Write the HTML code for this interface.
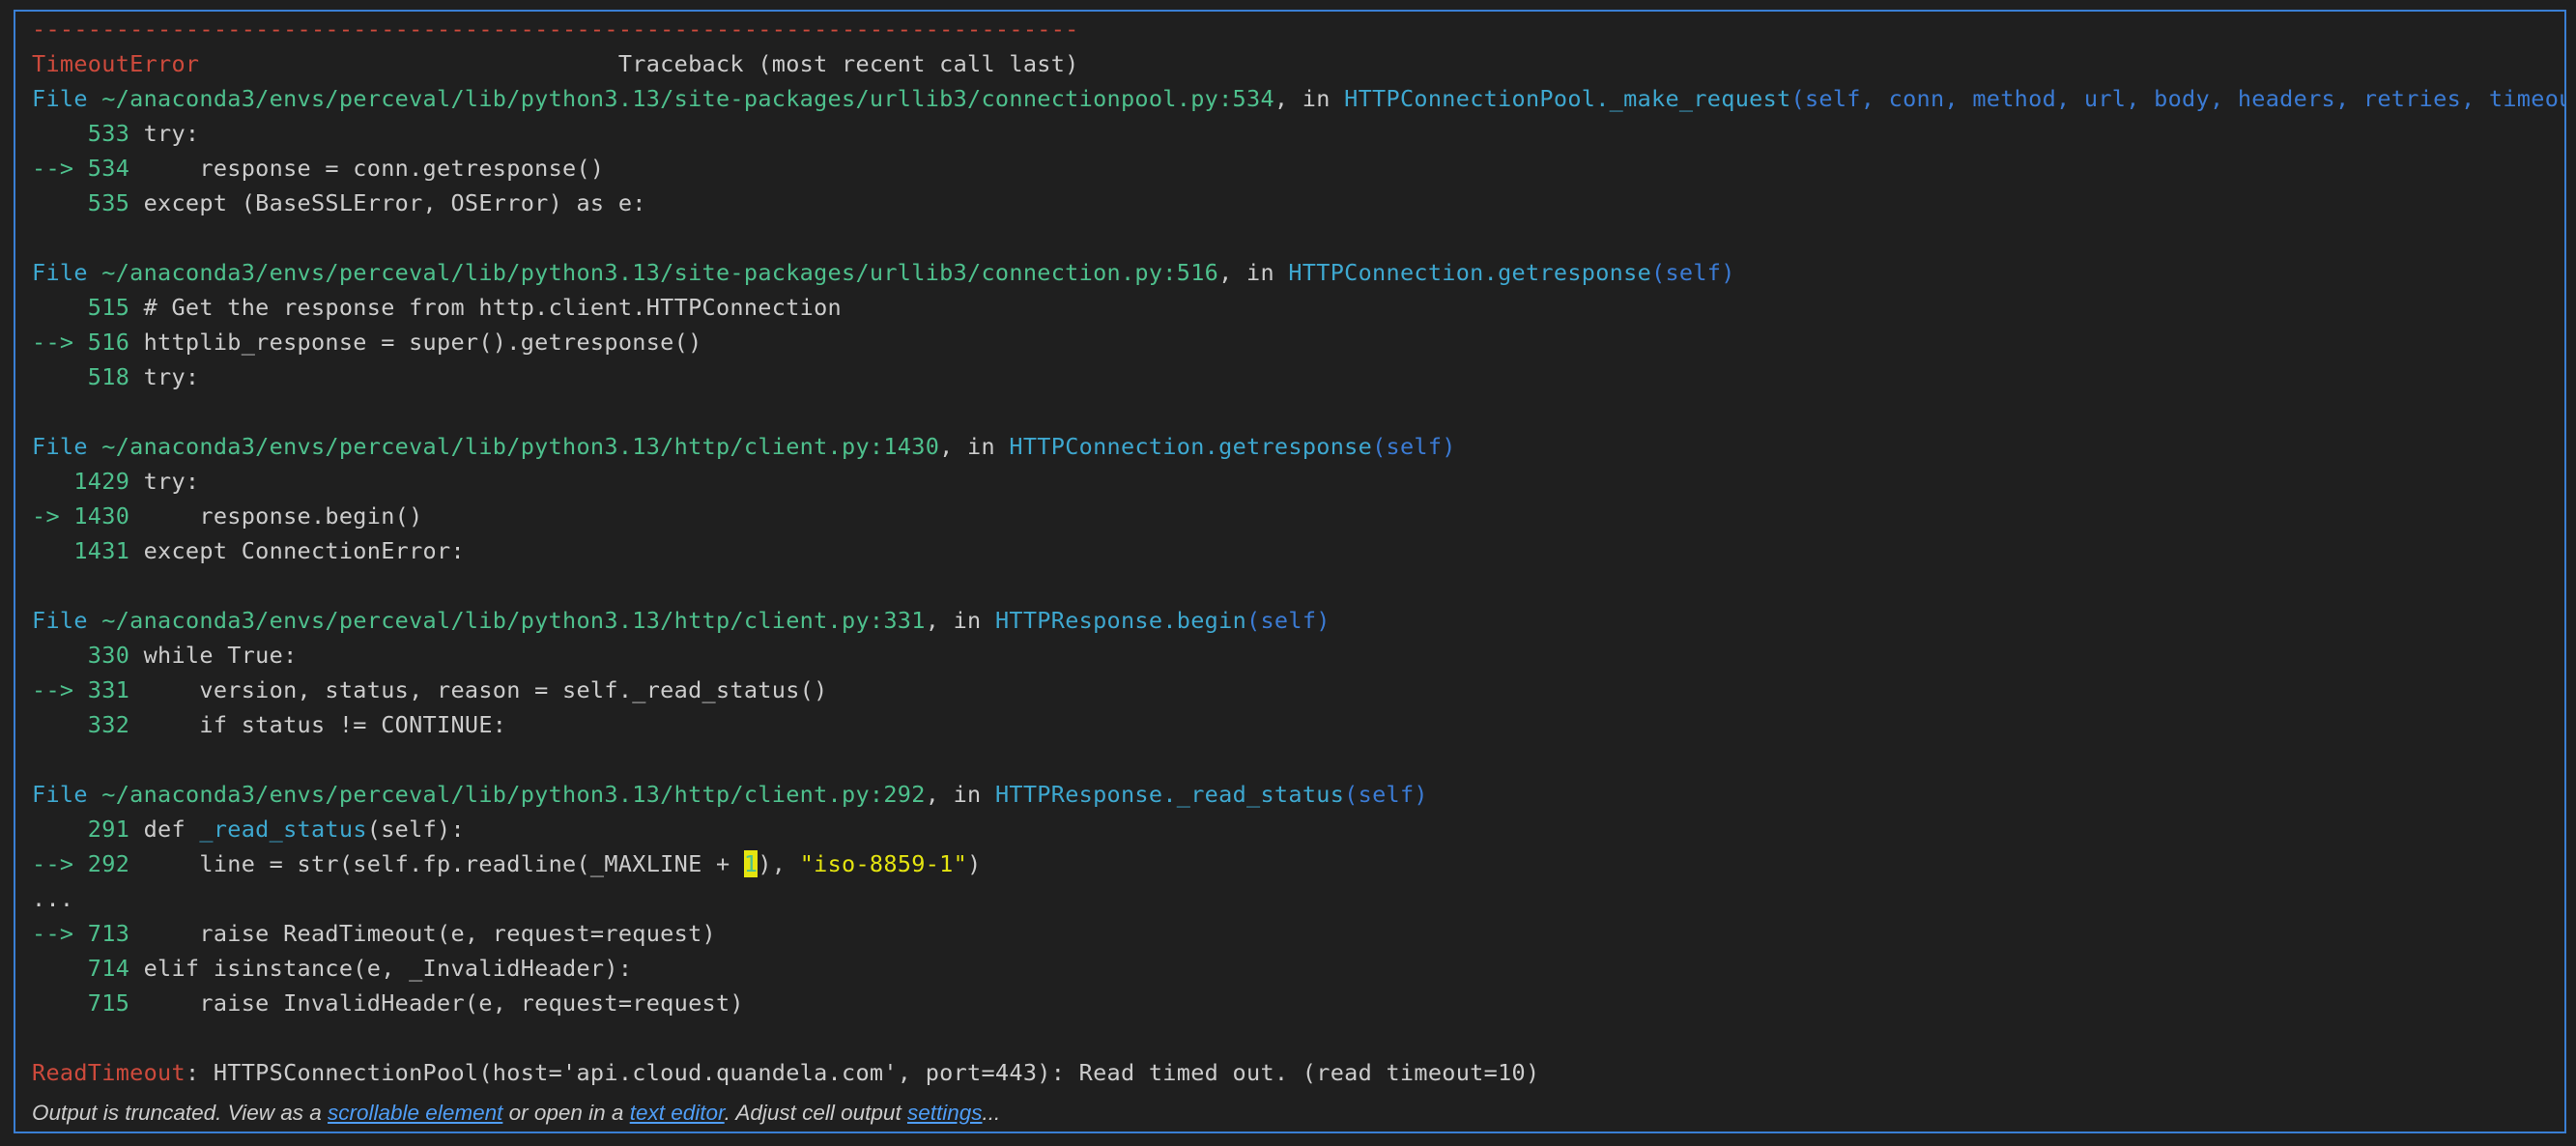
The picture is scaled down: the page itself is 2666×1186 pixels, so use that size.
<!DOCTYPE html>
<html><head><meta charset="utf-8">
<style>
html,body{margin:0;padding:0;background:#1f1f1f;width:2666px;height:1186px;overflow:hidden}
.box{position:absolute;left:14px;top:10px;width:2638px;height:1159px;border:2px solid #3a7fd4;overflow:hidden}
pre{position:absolute;left:17px;top:0;margin:0;font-family:"DejaVu Sans Mono","Liberation Mono",monospace;font-size:23.5px;line-height:36px;color:#cccccc;white-space:pre;letter-spacing:0.3px}
.r{color:#cd4a3c}.g{color:#4ec08d}.c{color:#3ea8d0}.b{color:#3b7bd4}.y{color:#e5e510}
.hl{background:#e5e510;color:#4ec08d}
.note{position:absolute;left:17px;top:1127px;font-family:"Liberation Sans",sans-serif;font-style:italic;font-size:22.5px;color:#cccccc;white-space:nowrap}
.note a{color:#4f9df5;text-decoration:underline}
</style></head><body>
<div class="box">
<pre><span class="r">---------------------------------------------------------------------------</span>
<span class="r">TimeoutError</span>                              Traceback (most recent call last)
<span class="c">File </span><span class="g">~/anaconda3/envs/perceval/lib/python3.13/site-packages/urllib3/connectionpool.py:534</span>, in <span class="c">HTTPConnectionPool._make_request</span><span class="b">(self, conn, method, url, body, headers, retries, timeout, chunked, response_conn, preload_content, decode_content, enforce_content_length)</span>
<span class="g">    533</span> try:
<span class="g">--&gt; 534</span>     response = conn.getresponse()
<span class="g">    535</span> except (BaseSSLError, OSError) as e:

<span class="c">File </span><span class="g">~/anaconda3/envs/perceval/lib/python3.13/site-packages/urllib3/connection.py:516</span>, in <span class="c">HTTPConnection.getresponse</span><span class="b">(self)</span>
<span class="g">    515</span> # Get the response from http.client.HTTPConnection
<span class="g">--&gt; 516</span> httplib_response = super().getresponse()
<span class="g">    518</span> try:

<span class="c">File </span><span class="g">~/anaconda3/envs/perceval/lib/python3.13/http/client.py:1430</span>, in <span class="c">HTTPConnection.getresponse</span><span class="b">(self)</span>
<span class="g">   1429</span> try:
<span class="g">-&gt; 1430</span>     response.begin()
<span class="g">   1431</span> except ConnectionError:

<span class="c">File </span><span class="g">~/anaconda3/envs/perceval/lib/python3.13/http/client.py:331</span>, in <span class="c">HTTPResponse.begin</span><span class="b">(self)</span>
<span class="g">    330</span> while True:
<span class="g">--&gt; 331</span>     version, status, reason = self._read_status()
<span class="g">    332</span>     if status != CONTINUE:

<span class="c">File </span><span class="g">~/anaconda3/envs/perceval/lib/python3.13/http/client.py:292</span>, in <span class="c">HTTPResponse._read_status</span><span class="b">(self)</span>
<span class="g">    291</span> def <span class="c">_read_status</span>(self):
<span class="g">--&gt; 292</span>     line = str(self.fp.readline(_MAXLINE + <span class="hl">1</span>), <span class="y">"iso-8859-1"</span>)
...
<span class="g">--&gt; 713</span>     raise ReadTimeout(e, request=request)
<span class="g">    714</span> elif isinstance(e, _InvalidHeader):
<span class="g">    715</span>     raise InvalidHeader(e, request=request)

<span class="r">ReadTimeout</span>: HTTPSConnectionPool(host='api.cloud.quandela.com', port=443): Read timed out. (read timeout=10)</pre>
<div class="note">Output is truncated. View as a <a>scrollable element</a> or open in a <a>text editor</a>. Adjust cell output <a>settings</a>...</div>
</div>
</body></html>
